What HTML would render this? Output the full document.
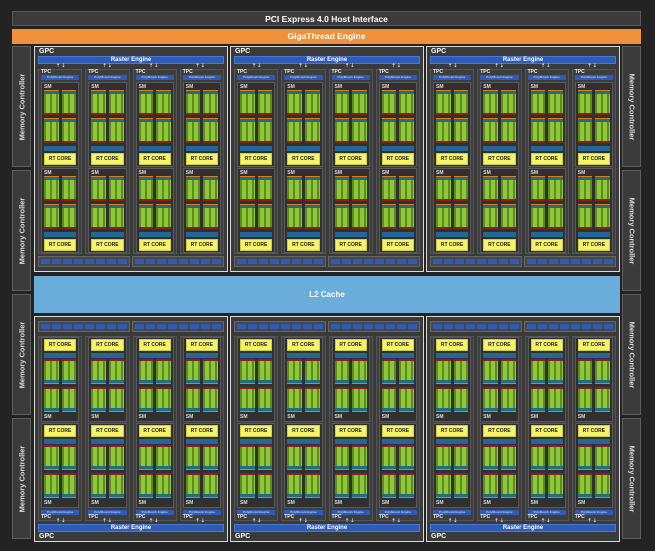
<!DOCTYPE html><html><head><style>
*{box-sizing:border-box;margin:0;padding:0}
body{width:655px;height:551px;background:#232323;position:relative;overflow:hidden;font-family:"Liberation Sans",sans-serif;font-weight:bold}
.bar{position:absolute;left:12px;width:629px;color:#fff;text-align:center;font-size:8.5px}
#pci{top:11px;height:15px;line-height:14px;background:#3b3b3b;border:1px solid #5a5a5a}
#giga{top:29px;height:15px;line-height:15px;background:#f0913a}
.mc{position:absolute;width:19px;height:121px;background:#3b3b3b;border:1px solid #5e5e5e}
.mc span{position:absolute;left:50%;top:50%;white-space:nowrap;color:#ddd;font-size:7.5px}
.mc.ml span{transform:translate(-50%,-50%) rotate(-90deg)}
.mc.mr span{transform:translate(-50%,-50%) rotate(90deg)}
#l2{position:absolute;left:34px;top:276px;width:586px;height:37px;background:#6aaddb;color:#fff;text-align:center;line-height:37px;font-size:8px}
.gpc{position:absolute;width:194px;height:226px;border:1px solid #d8d8d8;background:#3a3a3a;padding:0 3px;display:flex;flex-direction:column}
.gpc.b{flex-direction:column-reverse}
.glab{height:9px;color:#fff;font-size:7px;line-height:9px;padding-left:1px}
.ras{height:8px;background:#2d5bb5;border:1px solid #4a7ad0;color:#fff;font-size:6px;text-align:center;line-height:6px}
.arr{height:5px;display:flex}
.arr div{flex:1;text-align:center;color:#ddd;font-size:5px;line-height:5px;letter-spacing:1px}
.tpcs{height:183px;display:grid;grid-template-columns:repeat(4,1fr);gap:3px}
.tpc{border:1px solid #555;background:#3e3e3e;padding:0 2px;display:flex;flex-direction:column}
.b .tpc{flex-direction:column-reverse}
.tl{height:5px;color:#eee;font-size:5px;line-height:5px}
.pm{height:5px;background:#2d5bb5;color:#bcd;font-size:3px;text-align:center;line-height:5px;margin-bottom:1px}
.b .pm{margin-bottom:0;margin-top:1px}
.sm{height:85px;border:1px solid #5a5a5a;background:#303030;padding:1px 2px;margin-top:1px;display:flex;flex-direction:column}
.b .sm{flex-direction:column-reverse;margin-top:0;margin-bottom:1px}
.sl{height:6px;color:#ddd;font-size:5px;line-height:6px}
.gu{height:26px;margin-bottom:2px;display:flex;gap:3px;flex-direction:row}
.half{flex:1;display:flex;flex-direction:column}
.b .half{flex-direction:column-reverse}
.o{height:1px;background:#e07b20}.t{height:3px;background:#1f6f80}
.g{height:19px;background:repeating-linear-gradient(90deg,#5f8f12 0 2px,#8ec63f 2px 6px)}
.rd{height:2px;background:#8a2020}
.bd{height:5px;background:linear-gradient(#1f6f80 0 2px,#2d5bb5 2px 4px,#1f6f80 4px);margin-bottom:2px}
.b .bd{margin-bottom:0;margin-top:2px}
.rt{height:12px;background:#f4f36a;border:1px solid #cfce40;color:#222;font-size:5px;text-align:center;line-height:10px}
.mem{height:11px;margin-top:4px;display:flex;gap:2px}
.b .mem{margin-top:0;margin-bottom:4px}
.mh{flex:1;border:1px solid #666;background:#484848;display:flex;gap:2px;padding:2px}
.mh i{flex:1;background:#2d5bb5}
</style></head><body>
<div class="bar" id="pci">PCI Express 4.0 Host Interface</div>
<div class="bar" id="giga">GigaThread Engine</div>
<div class="mc ml" style="left:12px;top:46px"><span>Memory Controller</span></div>
<div class="mc ml" style="left:12px;top:170px"><span>Memory Controller</span></div>
<div class="mc ml" style="left:12px;top:294px"><span>Memory Controller</span></div>
<div class="mc ml" style="left:12px;top:418px"><span>Memory Controller</span></div>
<div class="mc mr" style="left:622px;top:46px"><span>Memory Controller</span></div>
<div class="mc mr" style="left:622px;top:170px"><span>Memory Controller</span></div>
<div class="mc mr" style="left:622px;top:294px"><span>Memory Controller</span></div>
<div class="mc mr" style="left:622px;top:418px"><span>Memory Controller</span></div>
<div id="l2">L2 Cache</div>

<template id="smt"><div class="sm"><div class="sl">SM</div><div class="gu"><div class="half"><div class="o"></div><div class="t"></div><div class="g"></div><div class="rd"></div></div><div class="half"><div class="o"></div><div class="t"></div><div class="g"></div><div class="rd"></div></div></div><div class="gu"><div class="half"><div class="o"></div><div class="t"></div><div class="g"></div><div class="rd"></div></div><div class="half"><div class="o"></div><div class="t"></div><div class="g"></div><div class="rd"></div></div></div><div class="bd"></div><div class="rt">RT CORE</div></div></template>
<template id="tpct"><div class="tpc"><div class="tl">TPC</div><div class="pm">PolyMorph Engine</div></div></template>
<template id="gpct"><div class="gpc"><div class="glab">GPC</div><div class="ras">Raster Engine</div><div class="arr"><div>⇡⇣</div><div>⇡⇣</div><div>⇡⇣</div><div>⇡⇣</div></div><div class="tpcs"></div><div class="mem"><div class="mh"><i></i><i></i><i></i><i></i><i></i><i></i><i></i><i></i></div><div class="mh"><i></i><i></i><i></i><i></i><i></i><i></i><i></i><i></i></div></div></div></template>
<script>
var xs=[34,230,426];
[[46,false],[316,true]].forEach(function(row){
 xs.forEach(function(x){
  var g=document.getElementById('gpct').content.firstElementChild.cloneNode(true);
  if(row[1])g.classList.add('b');
  g.style.left=x+'px';g.style.top=row[0]+'px';
  var ts=g.querySelector('.tpcs');
  for(var i=0;i<4;i++){
   var t=document.getElementById('tpct').content.firstElementChild.cloneNode(true);
   for(var j=0;j<2;j++)t.appendChild(document.getElementById('smt').content.firstElementChild.cloneNode(true));
   ts.appendChild(t);
  }
  document.body.appendChild(g);
 });
});
</script>
</body></html>
